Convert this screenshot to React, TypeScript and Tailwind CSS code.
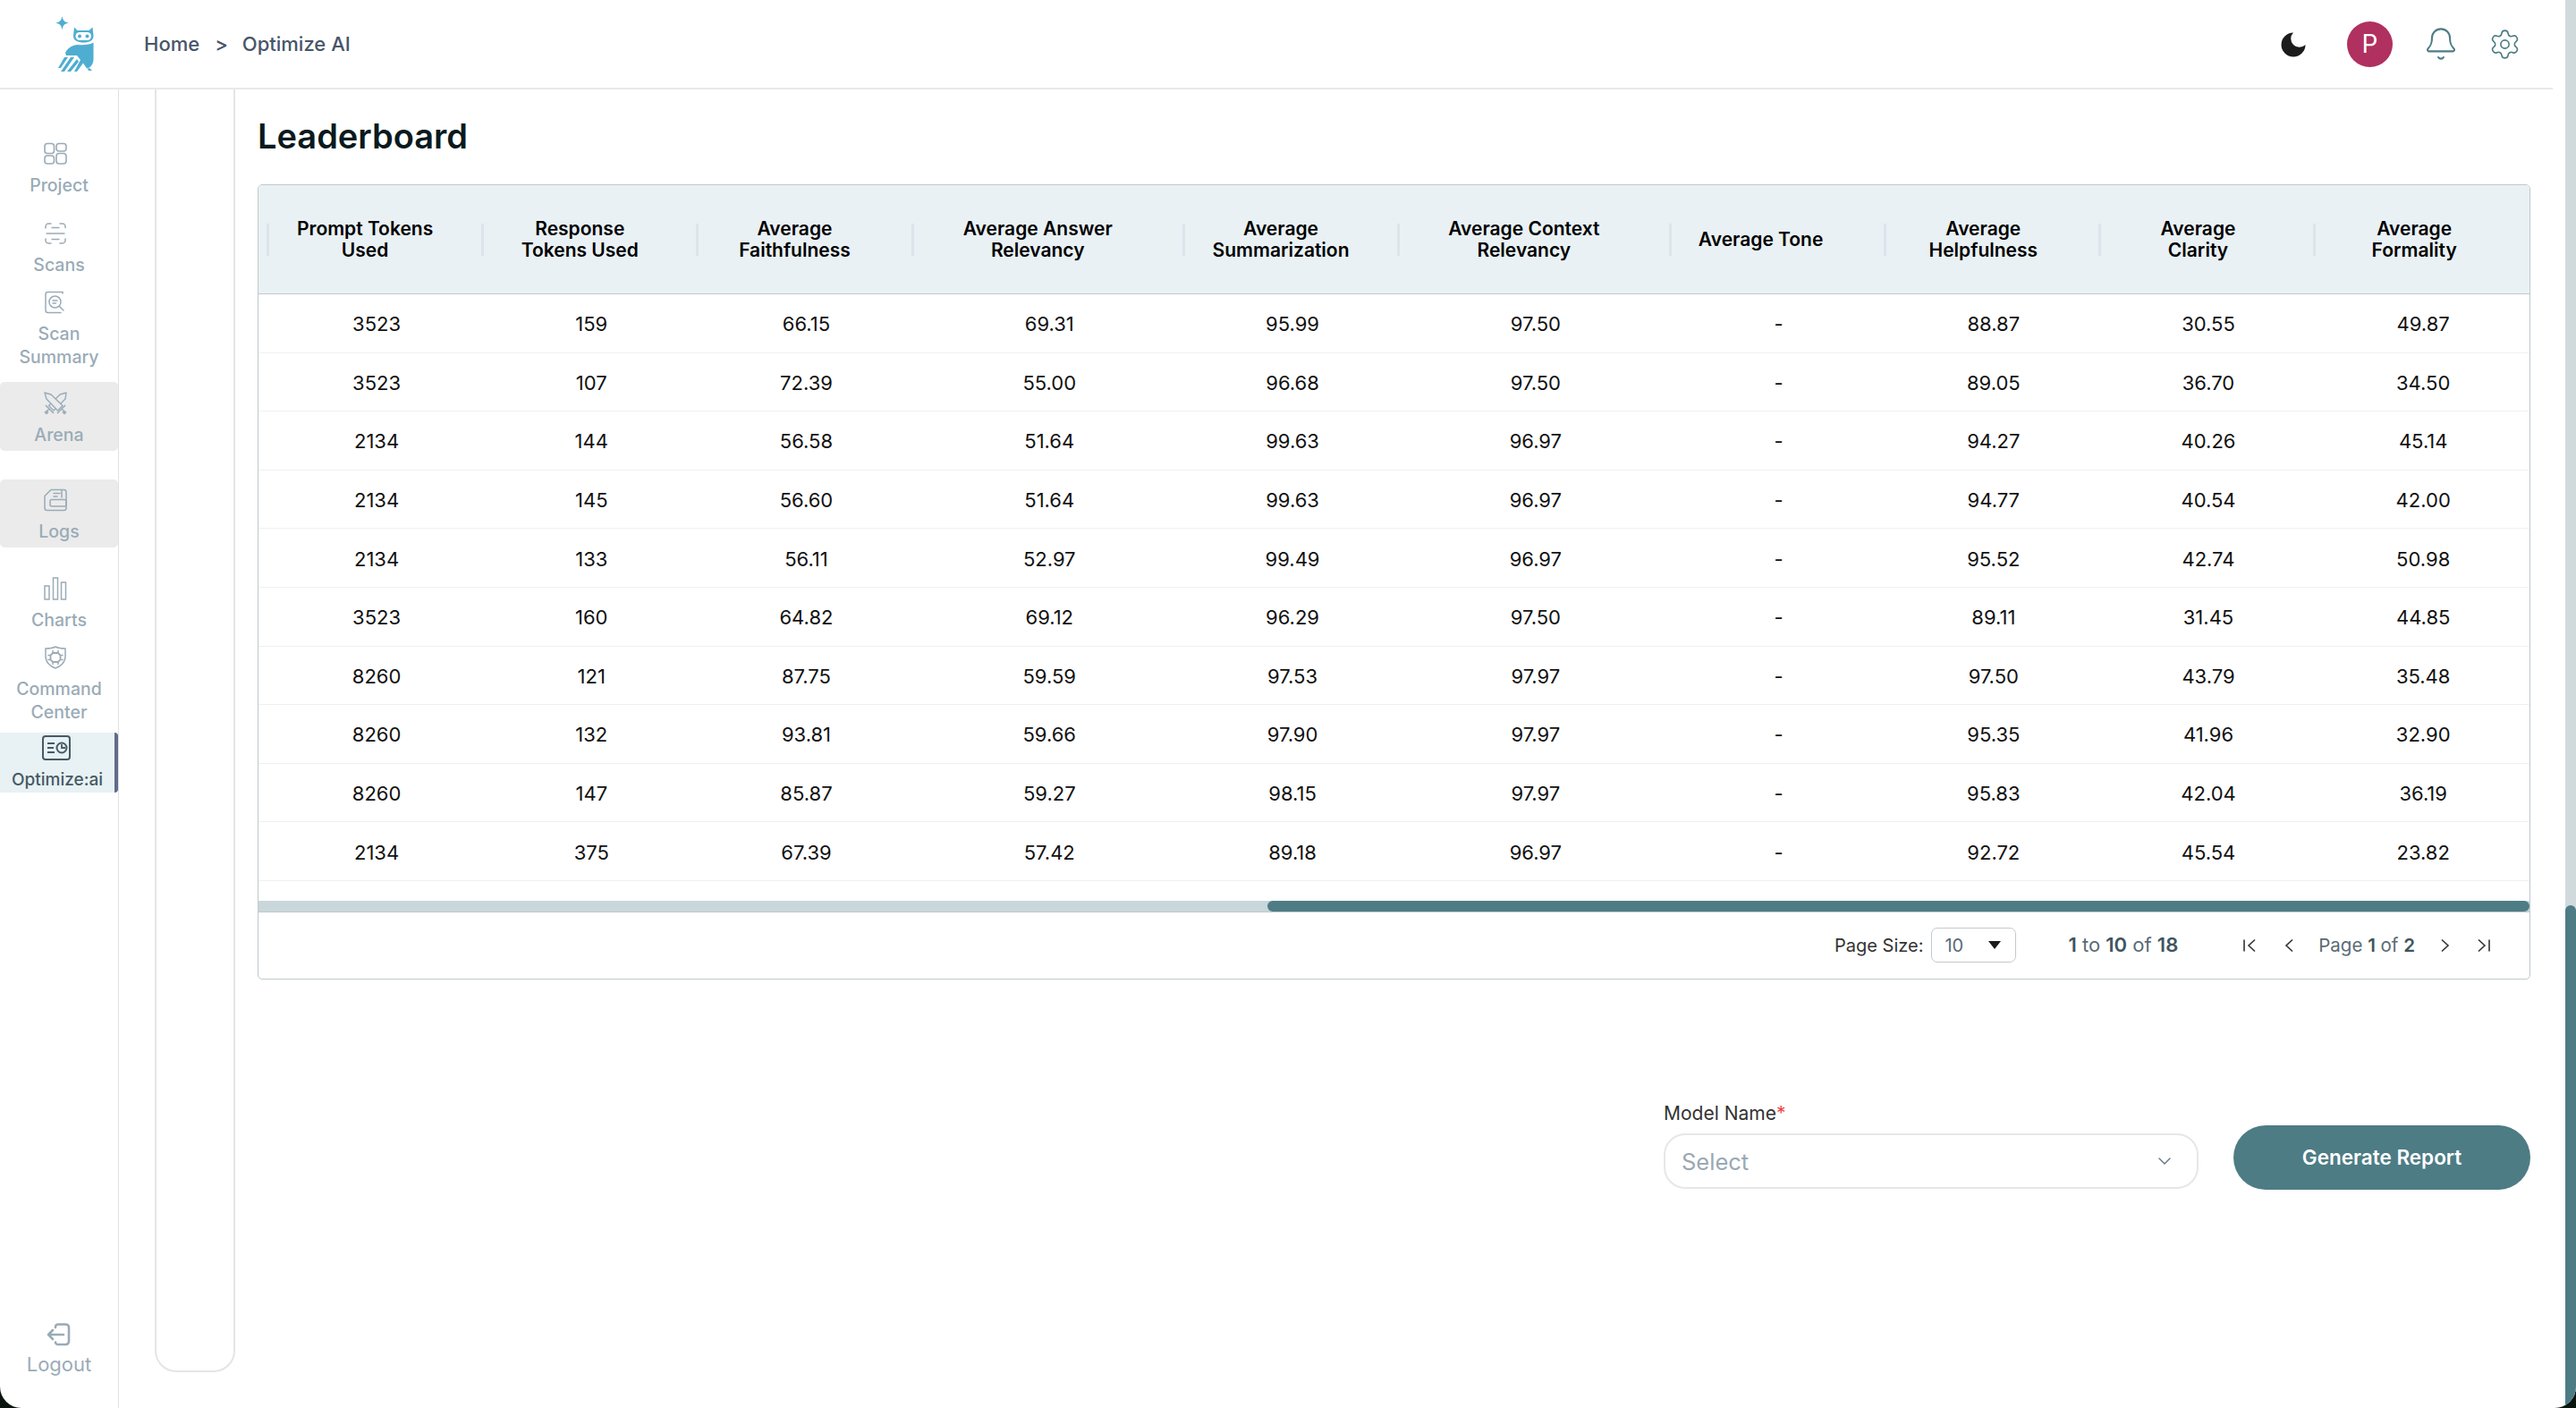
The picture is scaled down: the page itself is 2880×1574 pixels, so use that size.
import React from "react";
import { Bell, Settings, ChevronDown } from "lucide-react";

const columns = [
  { title: ["Prompt Tokens", "Used"], pad: "pr-[23px]" },
  { title: ["Response", "Tokens Used"], pad: "pr-[23px]" },
  { title: ["Average", "Faithfulness"], pad: "pr-[23px]" },
  { title: ["Average Answer", "Relevancy"], pad: "pr-[23px]" },
  { title: ["Average", "Summarization"], pad: "pr-[23px]" },
  { title: ["Average Context", "Relevancy"], pad: "pr-[23px]" },
  { title: ["Average Tone"], pad: "pr-[37px]" },
  { title: ["Average", "Helpfulness"], pad: "pr-[20px]" },
  { title: ["Average", "Clarity"], pad: "pr-[20px]" },
  { title: ["Average", "Formality"], pad: "pr-[17px]" },
];

const rows = [
  ["3523", "159", "66.15", "69.31", "95.99", "97.50", "-", "88.87", "30.55", "49.87"],
  ["3523", "107", "72.39", "55.00", "96.68", "97.50", "-", "89.05", "36.70", "34.50"],
  ["2134", "144", "56.58", "51.64", "99.63", "96.97", "-", "94.27", "40.26", "45.14"],
  ["2134", "145", "56.60", "51.64", "99.63", "96.97", "-", "94.77", "40.54", "42.00"],
  ["2134", "133", "56.11", "52.97", "99.49", "96.97", "-", "95.52", "42.74", "50.98"],
  ["3523", "160", "64.82", "69.12", "96.29", "97.50", "-", "89.11", "31.45", "44.85"],
  ["8260", "121", "87.75", "59.59", "97.53", "97.97", "-", "97.50", "43.79", "35.48"],
  ["8260", "132", "93.81", "59.66", "97.90", "97.97", "-", "95.35", "41.96", "32.90"],
  ["8260", "147", "85.87", "59.27", "98.15", "97.97", "-", "95.83", "42.04", "36.19"],
  ["2134", "375", "67.39", "57.42", "89.18", "96.97", "-", "92.72", "45.54", "23.82"],
];

const gridCols =
  "grid grid-cols-[240.2px_240.2px_240.2px_303.4px_240.2px_303.4px_240.2px_240.2px_240.2px_240.2px]";

function OwlLogo() {
  return (
    <svg width="70" height="75" viewBox="0 0 70 75" className="shrink-0 self-start mt-[10px] ml-[50px]">
      <path d="M19.5 8C20.5 13 22 14.8 27 15.5C22 16.5 20.5 18 19.5 23.5C18.5 18 17 16.5 12 15.5C17 14.8 18.5 13 19.5 8Z" fill="#4fadd1" />
      <path d="M33 20.5L36.5 24H49.5L53.5 20.5L54.5 30C54.5 35.5 50 37.5 43.5 37.5C37 37.5 32 35.5 32 30Z" fill="#4fadd1" />
      <rect x="34.5" y="26" width="17.5" height="9" rx="4.5" fill="#fff" />
      <circle cx="39" cy="30.5" r="2" fill="#4fadd1" />
      <circle cx="47.5" cy="30.5" r="2" fill="#4fadd1" />
      <path d="M23 49C26 43 31 40.5 37 40C44 40.5 51 40 54.5 37.5V56C54.5 62 51 66 47 66.5L43 60.5L36 70H33L40 57L36 52H24Z" fill="#4fadd1" />
      <path d="M22 54H26L18 66H15Z M29 54H33L22 70H18Z M36 56L38 59L29 70H25Z M48 67L50 66L53 69H49Z" fill="#4fadd1" />
    </svg>
  );
}

const iconClass = "shrink-0";
const stroke = "#9aabb7";

function ProjectIcon() {
  return (
    <svg width="26" height="26" viewBox="0 0 26 26" fill="none" stroke={stroke} strokeWidth="1.6" className={iconClass}>
      <rect x="1" y="1.5" width="10.5" height="11" rx="3" />
      <rect x="14" y="1.5" width="11" height="8.5" rx="3" />
      <rect x="1" y="15" width="10.5" height="9" rx="3" />
      <rect x="14" y="12.5" width="11" height="11.5" rx="3" />
    </svg>
  );
}

function ScansIcon() {
  return (
    <svg width="26" height="26" viewBox="0 0 26 26" fill="none" stroke={stroke} strokeWidth="1.5" strokeLinecap="round" className={iconClass}>
      <path d="M8 2H5C3.5 2 2 3.5 2 5V7M18 2H21C22.5 2 24 3.5 24 5V6.5M2 19V21C2 22.5 3.5 24 5 24H8M24 19V21C24 22.5 22.5 24 21 24H18" />
      <path d="M9 6.5H17M3 13H23M9 19.5H17" strokeWidth="1.4" />
    </svg>
  );
}

function ScanSummaryIcon() {
  return (
    <svg width="26" height="26" viewBox="0 0 26 26" fill="none" stroke={stroke} strokeWidth="1.5" strokeLinecap="round" className={iconClass}>
      <path d="M21 3V1.5H4.5C3 1.5 2 2.5 2 4V22C2 23.5 3 24.5 4.5 24.5H19" />
      <circle cx="12.5" cy="12.5" r="6.5" />
      <path d="M10 11H15M10 14H13.5M17.5 17.5L22 22" />
    </svg>
  );
}

function ArenaIcon() {
  return (
    <svg width="26" height="26" viewBox="0 0 26 26" fill="#ebebeb" stroke={stroke} strokeWidth="1.4" strokeLinejoin="round" className={iconClass}>
      <path d="M25 1L24 8L11 21L5.5 15.5L18 3Z" />
      <path d="M2 15L11 24M6 19L3.5 21.5M3.5 21.5L1.5 23L3 24.5L4.5 23Z" strokeWidth="1.6" />
      <path d="M1 1L8 3L21 15.5L15.5 21L3 8Z" />
      <path d="M24 15L15 24M20 19L22.5 21.5M22.5 21.5L24.5 23L23 24.5L21.5 23Z" strokeWidth="1.6" />
    </svg>
  );
}

function LogsIcon() {
  return (
    <svg width="26" height="26" viewBox="0 0 26 26" fill="none" stroke={stroke} strokeWidth="1.5" strokeLinecap="round" className={iconClass}>
      <path d="M8 1.5H22.5C24 1.5 25 2.5 25 4V22C25 23.5 24 24.5 22.5 24.5H3.5C2 24.5 1 23.5 1 22V8.5Z" />
      <rect x="7" y="12.5" width="18" height="7.5" rx="2" />
      <path d="M11 5.5H18M11 9H15M20 2V10" />
    </svg>
  );
}

function ChartsIcon() {
  return (
    <svg width="26" height="26" viewBox="0 0 26 26" fill="none" stroke={stroke} strokeWidth="1.5" className={iconClass}>
      <rect x="1" y="10" width="5" height="15" />
      <rect x="10.5" y="1" width="5" height="24" />
      <rect x="19.5" y="6" width="5" height="19" />
    </svg>
  );
}

function CommandIcon() {
  return (
    <svg width="26" height="26" viewBox="0 0 26 26" fill="none" stroke={stroke} strokeWidth="1.5" strokeLinecap="round" className={iconClass}>
      <path d="M13 1C16 2.5 20 3 24 3V12C24 18 19 23 13 25C7 23 2 18 2 12V3C6 3 10 2.5 13 1Z" />
      <path d="M10 8H16L18.5 10.5V15.5L16 18H10L7.5 15.5V10.5Z" strokeWidth="1.8" />
      <path d="M10 5.5V7M16 5.5V7M10 19V20.5M16 19V20.5M5 10.5H6.5M5 15.5H6.5M19.5 10.5H21M19.5 15.5H21" />
    </svg>
  );
}

function OptimizeIcon() {
  return (
    <svg width="32" height="28" viewBox="0 0 32 28" fill="none" stroke="#455a64" strokeWidth="2" className={iconClass}>
      <rect x="1" y="1" width="30" height="26" rx="3" />
      <path d="M6 9H14M6 14H13M6 19H14" strokeWidth="2.2" />
      <circle cx="22" cy="14" r="5.5" strokeWidth="2" />
      <path d="M22 10V14H26" strokeWidth="1.8" />
    </svg>
  );
}

function LogoutIcon() {
  return (
    <svg width="28" height="26" viewBox="0 0 28 26" fill="none" stroke={stroke} strokeWidth="2.6" strokeLinecap="round" strokeLinejoin="round" className={iconClass}>
      <path d="M11 5V4C11 2.5 12.5 1.5 14 1.5H22C24.5 1.5 26 3 26 5V20C26 22.5 24.5 24 22 24H14C12.5 24 11 23 11 21.5" />
      <path d="M20 13H3M8 8L3 13L8 18" />
    </svg>
  );
}

function NavItem({
  icon,
  lines,
  className,
  gap = "gap-[9px]",
  iconGap = "mr-[8px]",
  labelClass = "text-[19.5px] font-medium text-[#9aabb7]",
}: {
  icon: React.ReactNode;
  lines: string[];
  className: string;
  gap?: string;
  iconGap?: string;
  labelClass?: string;
}) {
  return (
    <div className={`flex flex-col items-center ${gap} ${className}`}>
      <div className={`h-[26px] flex items-center justify-center ${iconGap}`}>{icon}</div>
      <div className={`text-center leading-[26px] ${labelClass}`}>
        {lines.map((l) => (
          <div key={l}>{l}</div>
        ))}
      </div>
    </div>
  );
}

function Sidebar() {
  return (
    <aside className="w-[133px] shrink-0 border-r border-[#dfe1e3] flex flex-col">
      <NavItem icon={<ProjectIcon />} lines={["Project"]} className="mt-[59px]" />
      <NavItem icon={<ScansIcon />} lines={["Scans"]} className="mt-[28px]" />
      <NavItem icon={<ScanSummaryIcon />} lines={["Scan", "Summary"]} className="mt-[16px]" />
      <NavItem
        icon={<ArenaIcon />}
        lines={["Arena"]}
        className="mt-[15px] h-[77px] pt-[11px] bg-[#ebebeb] rounded-[5px]"
      />
      <NavItem
        icon={<LogsIcon />}
        lines={["Logs"]}
        className="mt-[32px] h-[76px] pt-[10px] bg-[#ebebeb] rounded-[5px]"
      />
      <NavItem icon={<ChartsIcon />} lines={["Charts"]} className="mt-[33px]" />
      <NavItem icon={<CommandIcon />} lines={["Command", "Center"]} className="mt-[16px]" />
      <NavItem
        icon={<OptimizeIcon />}
        lines={["Optimize:ai"]}
        iconGap="mr-[2px]"
        gap="gap-[10px]"
        className="mt-[10px] h-[67px] pt-[4px] bg-[#e8f1f4] border-r-[4px] border-[#5f6b8a] rounded-r-[4px]"
        labelClass="text-[19px] font-medium text-[#455a64]"
      />
      <NavItem
        icon={<LogoutIcon />}
        lines={["Logout"]}
        iconGap="mr-[2px]"
        className="mt-auto mb-[36px]"
        gap="gap-[7px]"
        labelClass="text-[22px] font-normal text-[#9aabb7]"
      />
    </aside>
  );
}

function Header() {
  return (
    <header className="h-[100px] shrink-0 border-b-2 border-[#e8e9ea] flex items-center">
      <OwlLogo />
      <nav className="ml-[41px] flex items-center text-[22px] font-medium text-[#475569]">
        <span>Home</span>
        <span className="ml-[17px]">&gt;</span>
        <span className="ml-[16px]">Optimize AI</span>
      </nav>
      <div className="ml-auto flex items-center pr-[35px]">
        <svg width="36" height="36" viewBox="0 0 24 24" className="mt-[2px]">
          <path d="M12 3a6 6 0 0 0 9 9 9 9 0 1 1-9-9Z" fill="#1c1c1c" />
        </svg>
        <div className="ml-[42px] w-[51px] h-[51px] rounded-full bg-[#b03060] text-white text-[28px] flex items-center justify-center">
          P
        </div>
        <Bell size={40} color="#4d7c85" strokeWidth={1.25} className="ml-[34px]" />
        <Settings size={37} color="#4d7c85" strokeWidth={1.05} className="ml-[33px]" />
      </div>
    </header>
  );
}

function FirstIcon() {
  return (
    <svg width="18" height="18" viewBox="0 0 18 18" fill="none" stroke="#333" strokeWidth="1.6">
      <path d="M3 2.5V15.5M15 2.5L8 9L15 15.5" />
    </svg>
  );
}

function Chevron({ flip }: { flip?: boolean }) {
  return (
    <svg width="18" height="18" viewBox="0 0 18 18" fill="none" stroke="#333" strokeWidth="1.6">
      <path d={flip ? "M6 2.5L13 9L6 15.5" : "M12 2.5L5 9L12 15.5"} />
    </svg>
  );
}

function LastIcon() {
  return (
    <svg width="18" height="18" viewBox="0 0 18 18" fill="none" stroke="#333" strokeWidth="1.6">
      <path d="M15 2.5V15.5M3 2.5L10 9L3 15.5" />
    </svg>
  );
}

function Leaderboard() {
  return (
    <div className="mt-[30px] border border-[#c0c8cc] rounded-[5px] overflow-hidden">
      <div className={`${gridCols} h-[122px] pl-[9px] bg-[#e9f1f4] border-b border-[#c0c8cc]`}>
        {columns.map((c, i) => (
          <div key={i} className="flex items-center">
            <span className="w-[3px] h-[36px] bg-[#dde4ec] shrink-0" />
            <div className={`flex-1 text-center text-[21px] leading-[23.6px] font-semibold text-black ${c.pad}`}>
              {c.title.map((t) => (
                <div key={t}>{t}</div>
              ))}
            </div>
          </div>
        ))}
      </div>
      {rows.map((r, i) => (
        <div key={i} className={`${gridCols} h-[65.6px] pl-[9px] border-b border-[#eef0f1]`}>
          {r.map((v, j) => (
            <div key={j} className="flex items-center justify-center pl-[6px] pt-[3px] text-[22px] text-[#111]">
              {v}
            </div>
          ))}
        </div>
      ))}
      <div className="mt-[22px] h-[12px] bg-[#c9d6da] flex justify-end">
        <div className="w-[1411px] bg-[#4d7c85] rounded-full" />
      </div>
      <div className="h-[75px] border-t border-[#c0c8cc] flex items-center justify-end pr-[42px] text-[20px]">
        <span className="text-[#333]">Page Size:</span>
        <div className="ml-[9px] w-[95px] h-[39px] border border-[#c4c9cc] rounded-[7px] flex items-center justify-between pl-[14px] pr-[16px] text-[#5a6b75]">
          <span>10</span>
          <span className="w-0 h-0 border-x-[7px] border-x-transparent border-t-[9px] border-t-[#1c1c1c]" />
        </div>
        <span className="ml-[58px] text-[22px] text-[#5a6b75]">
          <b className="font-semibold text-[#3f5560]">1</b> to <b className="font-semibold text-[#3f5560]">10</b> of{" "}
          <b className="font-semibold text-[#3f5560]">18</b>
        </span>
        <span className="ml-[71px]">
          <FirstIcon />
        </span>
        <span className="ml-[27px]">
          <Chevron />
        </span>
        <span className="ml-[23px] text-[20.5px] text-[#5a6b75]">
          Page <b className="font-semibold text-[#3f5560]">1</b> of <b className="font-semibold text-[#3f5560]">2</b>
        </span>
        <span className="ml-[24px]">
          <Chevron flip />
        </span>
        <span className="ml-[26px]">
          <LastIcon />
        </span>
      </div>
    </div>
  );
}

function ReportForm() {
  return (
    <div className="mt-[137px] flex justify-end items-end gap-[39px]">
      <div className="w-[598px] mb-[1px]">
        <div className="h-[26px] leading-[26px] text-[21px] text-[#333] mb-[9px]">
          Model Name<span className="text-[#ef4444]">*</span>
        </div>
        <div className="h-[62px] rounded-[24px] border-2 border-[#e5e7ea] flex items-center justify-between pl-[18px] pr-[24px]">
          <span className="text-[25.5px] text-[#9aa8b3] pt-[2px]">Select</span>
          <ChevronDown size={24} color="#5f7480" strokeWidth={1.4} />
        </div>
      </div>
      <button className="w-[332px] h-[72px] rounded-[36px] bg-[#4d7c85] text-white text-[22.5px] font-semibold">
        Generate Report
      </button>
    </div>
  );
}

export default function App() {
  return (
    <div className="w-[2880px] h-[1574px] bg-[#0b1510] overflow-hidden font-['Inter',sans-serif]">
      <div className="h-full flex bg-white rounded-b-[24px] overflow-hidden">
        <div className="flex-1 flex flex-col pr-[14px]">
          <Header />
          <div className="flex-1 flex min-h-0">
            <Sidebar />
            <div className="ml-[40px] w-[90px] h-[1434px] shrink-0 border-x-2 border-b-2 border-[#e3e5e7] rounded-b-[24px]" />
            <main className="ml-[25px] w-[2541px] shrink-0">
              <h1 className="pt-[28px] text-[38px] leading-[48px] font-semibold text-[#0a1a1e]">Leaderboard</h1>
              <Leaderboard />
              <ReportForm />
            </main>
          </div>
        </div>
        <div className="w-[12px] shrink-0 bg-[#d0dadd] flex flex-col">
          <div className="h-[1012px] shrink-0" />
          <div className="flex-1 bg-[#4d7c85] rounded-t-full" />
        </div>
      </div>
    </div>
  );
}
